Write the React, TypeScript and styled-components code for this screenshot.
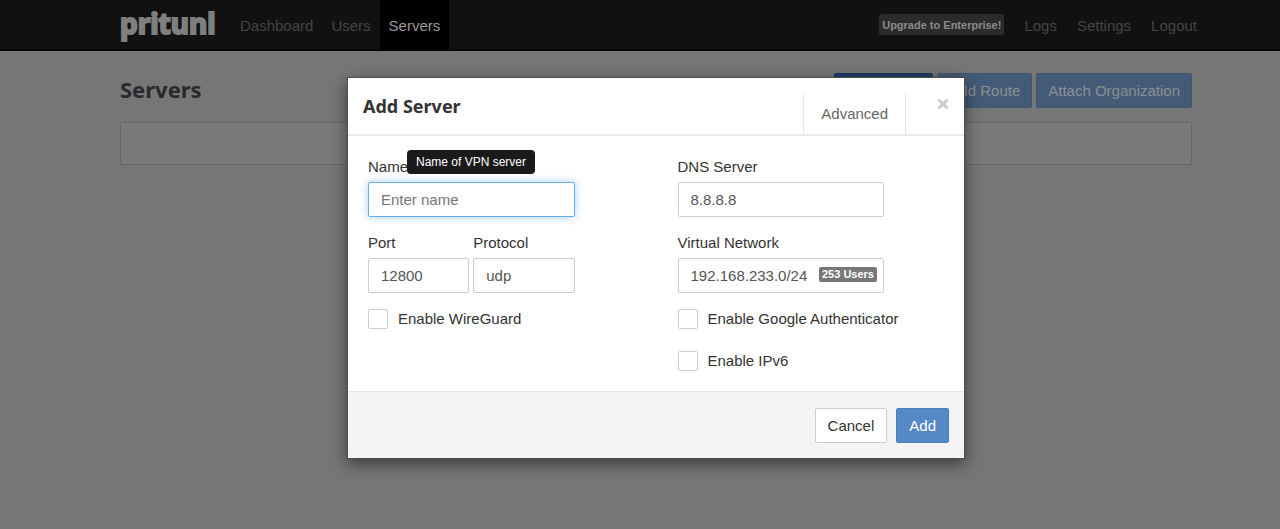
import React from 'react';
import styled, { createGlobalStyle } from 'styled-components';

const GlobalStyle = createGlobalStyle`
  * { box-sizing: border-box; }
  html, body { margin: 0; }
  body {
    background: #767676;
    color: #333;
    font: 15px/20px "Liberation Sans", Arial, sans-serif;
  }
  button, input, select { font: inherit; }
`;

const Navbar = styled.header`
  display: flex;
  align-items: stretch;
  height: 51px;
  padding: 0 83px 0 120px;
  background: #111;
  border-bottom: 2px solid #050505;
`;

const Brand = styled.a`
  width: 111px;
  color: #7f7f7f;
  -webkit-text-stroke: 2px #7f7f7f;
  stroke-linejoin: round;
  font: 700 28px/46px "Noto Sans", sans-serif;
  text-decoration: none;
`;

const NavGroup = styled.nav`
  display: flex;
  align-items: center;
`;

const RightGroup = styled(NavGroup)`
  margin-left: auto;
  gap: 20px;
`;

const NavLink = styled.a<{ $active?: boolean }>`
  padding: 16px 9px 13px;
  color: ${p => (p.$active ? '#999' : '#444')};
  background: ${p => (p.$active ? '#000' : 'transparent')};
  text-decoration: none;
`;

const SideLink = styled(NavLink)`
  padding: 16px 0 13px;
`;

const Upgrade = styled.button`
  height: 21px;
  padding: 0 3px;
  border: 0;
  border-radius: 2px;
  background: #2b2b2b;
  color: #8c8c8c;
  font-size: 11px;
  font-weight: 700;
  line-height: 20px;
`;

const Page = styled.main`
  padding: 22px 88px 0 120px;
`;

const PageHead = styled.div`
  display: flex;
  align-items: flex-start;
  gap: 4px;
  margin-bottom: 14px;
`;

const PageTitle = styled.h1`
  flex: 1;
  margin: 0;
  color: #27292c;
  font: 700 22px/32px "Noto Sans", sans-serif;
`;

const PageButton = styled.button<{ $strong?: boolean }>`
  height: 35px;
  padding: 0 11px;
  border: 1px solid ${p => (p.$strong ? '#1b3558' : '#40566f')};
  border-radius: 2px;
  background: ${p => (p.$strong ? '#213f66' : '#445b78')};
  color: #8b8f94;
`;

const EmptyPanel = styled.section`
  height: 43px;
  border: 1px solid #676767;
  border-radius: 2px;
  background: #7a7a7a;
  box-shadow: 0 1px 1px #6d6d6d;
`;

const Layer = styled.div`
  position: absolute;
  inset: 0;
  display: flex;
  align-items: flex-start;
  justify-content: center;
  padding: 77px 0 0 32px;
`;

const Dialog = styled.section`
  width: 618px;
  border: 1px solid #4c4c4c;
  background: #fff;
  box-shadow: 0 5px 15px rgba(0, 0, 0, 0.5);
`;

const DialogHead = styled.header`
  display: flex;
  align-items: flex-start;
  height: 58px;
  padding: 0 15px;
  border-bottom: 2px solid #ebebeb;
`;

const DialogTitle = styled.h2`
  flex: 1;
  margin: 15px 0 0;
  font: 700 18px/26px "Noto Sans", sans-serif;
`;

const Advanced = styled.button`
  align-self: flex-end;
  height: 40px;
  padding: 0 17px;
  border: solid #e5e5e5;
  border-width: 0 1px;
  background: none;
  color: #666;
`;

const Close = styled.button`
  display: flex;
  width: 12px;
  height: 12px;
  margin: 20px 0 0 31px;
  padding: 0;
  border: 0;
  background: none;
`;

const DialogBody = styled.div`
  display: grid;
  grid-template-columns: 1fr 1fr;
  column-gap: 103px;
  padding: 21px 80px 20px 20px;
`;

const Column = styled.div`
  min-width: 0;
`;

const FieldRow = styled.div`
  display: flex;
  gap: 4px;
`;

const Field = styled.div`
  position: relative;
  flex: 1;
  min-width: 0;
  margin-bottom: 16px;
`;

const Label = styled.label`
  display: block;
  margin-bottom: 5px;
`;

const controlStyle = `
  display: block;
  width: 100%;
  height: 35px;
  padding: 0 12px;
  border: 1px solid #ccc;
  border-radius: 2px;
  background: #fff;
  color: #555;
  appearance: none;
  outline: 0;
`;

const TextInput = styled.input<{ $active?: boolean }>`
  ${controlStyle}
  ${p => p.$active && 'border-color: #66afe9; box-shadow: 0 0 8px rgba(102, 175, 233, 0.6);'}
  &::placeholder { color: #777; }
`;

const Select = styled.select`
  ${controlStyle}
`;

const Tooltip = styled.div`
  position: absolute;
  top: -7px;
  left: 39px;
  padding: 2px 9px;
  border-radius: 4px;
  background: #1a1a1a;
  color: #fff;
  font-size: 12px;
  white-space: nowrap;
`;

const Badge = styled.span`
  position: absolute;
  right: 7px;
  bottom: 11px;
  padding: 0 3px;
  border-radius: 2px;
  background: #777;
  color: #fff;
  font-size: 11px;
  font-weight: 700;
  line-height: 15px;
`;

const Check = styled.label`
  display: flex;
  align-items: center;
  gap: 10px;
  margin-bottom: 22px;
  white-space: nowrap;
  &:last-child { margin-bottom: 0; }
`;

const CheckBox = styled.input`
  flex: none;
  width: 20px;
  height: 20px;
  margin: 0;
  border: 1px solid #ccc;
  border-radius: 2px;
  background: #fff;
  appearance: none;
`;

const DialogFoot = styled.footer`
  display: flex;
  justify-content: flex-end;
  gap: 9px;
  padding: 16px 15px 15px;
  border-top: 1px solid #e5e5e5;
  background: #f4f4f4;
`;

const Button = styled.button<{ $primary?: boolean }>`
  height: 35px;
  padding: 0 12px;
  border: 1px solid ${p => (p.$primary ? '#4b80bf' : '#ccc')};
  border-radius: 2px;
  background: ${p => (p.$primary ? '#5488c7' : '#fff')};
  color: ${p => (p.$primary ? '#fff' : '#333')};
`;

export default function App() {
  return (
    <>
      <GlobalStyle />
      <Navbar>
        <Brand href="#">pritunl</Brand>
        <NavGroup>
          <NavLink href="#dashboard">Dashboard</NavLink>
          <NavLink href="#users">Users</NavLink>
          <NavLink href="#servers" $active>Servers</NavLink>
        </NavGroup>
        <RightGroup>
          <Upgrade type="button">Upgrade to Enterprise!</Upgrade>
          <SideLink href="#logs">Logs</SideLink>
          <SideLink href="#settings">Settings</SideLink>
          <SideLink href="#logout">Logout</SideLink>
        </RightGroup>
      </Navbar>
      <Page>
        <PageHead>
          <PageTitle>Servers</PageTitle>
          <PageButton type="button" $strong>Add Server</PageButton>
          <PageButton type="button">Add Route</PageButton>
          <PageButton type="button">Attach Organization</PageButton>
        </PageHead>
        <EmptyPanel />
      </Page>
      <Layer>
        <Dialog role="dialog" aria-labelledby="dialog-title">
          <DialogHead>
            <DialogTitle id="dialog-title">Add Server</DialogTitle>
            <Advanced type="button">Advanced</Advanced>
            <Close type="button" aria-label="Close">
              <svg width="12" height="12" viewBox="0 0 12 12" stroke="#ccc" strokeWidth="3">
                <path d="M1.5 1.5l9 9M10.5 1.5l-9 9" />
              </svg>
            </Close>
          </DialogHead>
          <DialogBody>
            <Column>
              <Field>
                <Label htmlFor="name">Name</Label>
                <TextInput id="name" placeholder="Enter name" $active />
                <Tooltip role="tooltip">Name of VPN server</Tooltip>
              </Field>
              <FieldRow>
                <Field>
                  <Label htmlFor="port">Port</Label>
                  <TextInput id="port" defaultValue="12800" />
                </Field>
                <Field>
                  <Label htmlFor="protocol">Protocol</Label>
                  <Select id="protocol" defaultValue="udp">
                    <option>udp</option>
                    <option>tcp</option>
                  </Select>
                </Field>
              </FieldRow>
              <Check><CheckBox type="checkbox" />Enable WireGuard</Check>
            </Column>
            <Column>
              <Field>
                <Label htmlFor="dns">DNS Server</Label>
                <TextInput id="dns" defaultValue="8.8.8.8" />
              </Field>
              <Field>
                <Label htmlFor="network">Virtual Network</Label>
                <TextInput id="network" defaultValue="192.168.233.0/24" />
                <Badge>253 Users</Badge>
              </Field>
              <Check><CheckBox type="checkbox" />Enable Google Authenticator</Check>
              <Check><CheckBox type="checkbox" />Enable IPv6</Check>
            </Column>
          </DialogBody>
          <DialogFoot>
            <Button type="button">Cancel</Button>
            <Button type="button" $primary>Add</Button>
          </DialogFoot>
        </Dialog>
      </Layer>
    </>
  );
}
